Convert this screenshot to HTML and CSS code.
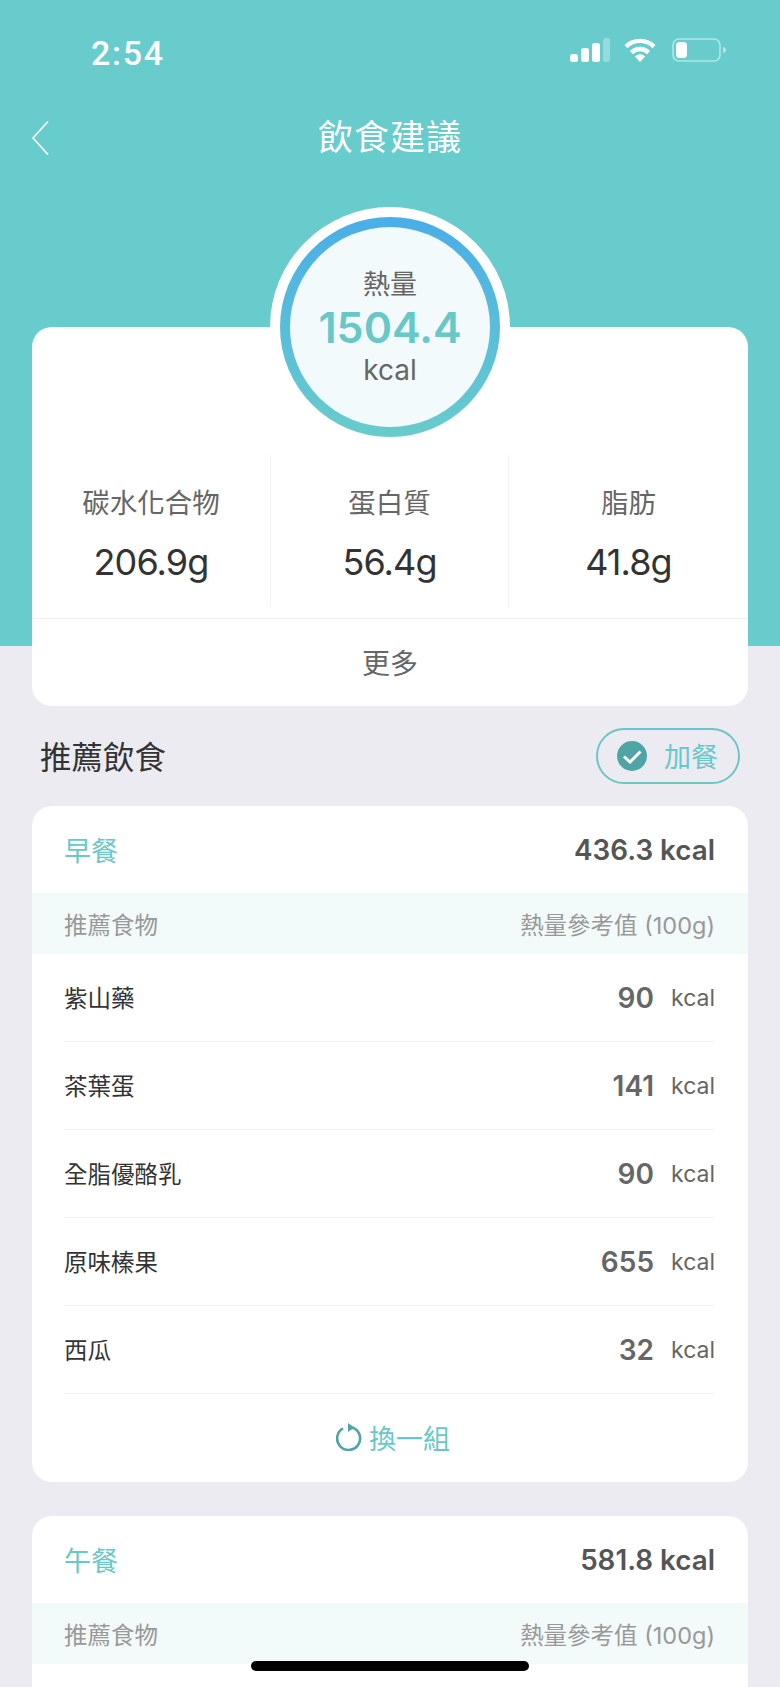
FILE: index.html
```html
<!DOCTYPE html>
<html lang="zh-Hant">
<head>
<meta charset="utf-8">
<title>飲食建議</title>
<link rel="stylesheet" href="styles.css">
</head>
<body>
<div class="screen">
  <div class="status">
    <span class="time">2:54</span>
    <div class="status-icons">
      <svg class="sig" width="40" height="24" viewBox="0 0 40 24"><rect x="0" y="16" width="8" height="8" rx="2.5" fill="#fff"/><rect x="11" y="10" width="8" height="14" rx="2.5" fill="#fff"/><rect x="22" y="5" width="8" height="19" rx="2.5" fill="#fff"/><rect x="33" y="0" width="7" height="24" rx="2.5" fill="#fff" opacity=".3"/></svg>
      <svg class="wifi" width="34" height="24" viewBox="0 0 34 24"><path d="M17 24l-5.2-5.6a7.4 7.4 0 0 1 10.4 0z" fill="#fff"/><path d="M8.5 14.6a12 12 0 0 1 17 0M3 8.6a20 20 0 0 1 28 0" fill="none" stroke="#fff" stroke-width="4.4" stroke-linecap="butt"/></svg>
      <svg class="batt" width="55" height="24" viewBox="0 0 55 24"><rect x="1" y="1" width="47" height="22" rx="6" fill="none" stroke="#fff" stroke-opacity=".5" stroke-width="1.6"/><rect x="4" y="4" width="11" height="16" rx="3.5" fill="#fff"/><path d="M51 9c2 .5 3 1.500 3 3s-1 2.500-3 3z" fill="#fff" fill-opacity=".5"/></svg>
    </div>
  </div>
  <div class="nav">
    <svg class="back" width="18" height="34" viewBox="0 0 18 34"><path d="M16.500 1L2 17l14.500 16" fill="none" stroke="#fff" stroke-width="1.700" stroke-linecap="round" stroke-linejoin="round"/></svg>
    <h1 class="nav-title">飲食建議</h1>
  </div>
  <div class="ring-wrap">
    <div class="ring-outer">
      <div class="ring">
        <div class="ring-inner">
          <span class="ring-label">熱量</span>
          <span class="ring-value">1504.4</span>
          <span class="ring-unit">kcal</span>
        </div>
      </div>
    </div>
  </div>
  <section class="card summary">
    <div class="macros">
      <div class="macro"><span class="macro-label">碳水化合物</span><span class="macro-value">206.9g</span></div>
      <div class="macro"><span class="macro-label">蛋白質</span><span class="macro-value">56.4g</span></div>
      <div class="macro"><span class="macro-label">脂肪</span><span class="macro-value">41.8g</span></div>
    </div>
    <div class="more">更多</div>
  </section>
  <div class="section-head">
    <h2 class="section-title">推薦飲食</h2>
    <div class="add-btn">
      <svg width="30" height="30" viewBox="0 0 30 30"><circle cx="15" cy="15" r="15" fill="#4fa5a6"/><path d="M7 15.500l6 5.500 10.500-10.500" fill="none" stroke="#fff" stroke-width="3"/></svg>
      <span>加餐</span>
    </div>
  </div>
  <section class="card meal">
    <div class="meal-head"><span class="meal-name">早餐</span><span class="meal-kcal">436.3 kcal</span></div>
    <div class="meal-sub"><span>推薦食物</span><span>熱量參考值 (100g)</span></div>
    <div class="food"><span class="food-name">紫山藥</span><span class="food-num">90</span><span class="food-unit">kcal</span></div>
    <div class="food"><span class="food-name">茶葉蛋</span><span class="food-num">141</span><span class="food-unit">kcal</span></div>
    <div class="food"><span class="food-name">全脂優酪乳</span><span class="food-num">90</span><span class="food-unit">kcal</span></div>
    <div class="food"><span class="food-name">原味榛果</span><span class="food-num">655</span><span class="food-unit">kcal</span></div>
    <div class="food"><span class="food-name">西瓜</span><span class="food-num">32</span><span class="food-unit">kcal</span></div>
    <div class="swap">
      <svg width="26" height="28" viewBox="0 0 26 28"><path d="M16.500 4.600A11.500 11.500 0 1 1 7 5.400" fill="none" stroke="#4fa5a6" stroke-width="2.600"/><path d="M12 0l6.500 4.500L12 9z" fill="#4fa5a6"/></svg>
      <span>換一組</span>
    </div>
  </section>
  <section class="card meal lunch">
    <div class="meal-head"><span class="meal-name">午餐</span><span class="meal-kcal">581.8 kcal</span></div>
    <div class="meal-sub"><span>推薦食物</span><span>熱量參考值 (100g)</span></div>
  </section>
  <div class="home-bar"></div>
</div>
</body>
</html>
```
FILE: styles.css
```css
* { box-sizing: border-box; }
html, body { margin: 0; padding: 0; }
body { font-family: Inter, "Noto Sans CJK TC", sans-serif; }
.screen {
  position: relative;
  width: 780px;
  height: 1687px;
  overflow: hidden;
  background: linear-gradient(#68cccc 646px, #ebebf1 646px);
}
.status {
  height: 104px;
  padding: 35px 53px 0 91px;
  display: flex;
  justify-content: space-between;
  align-items: flex-start;
}
.time {
  font: 500 34px/36px Roboto, sans-serif;
  letter-spacing: 1.700px;
  color: #fff;
}
.status-icons { display: flex; gap: 15px; padding-top: 3px; }
.sig { margin-right: -2px; }
.nav {
  height: 66px;
  position: relative;
  display: flex;
  align-items: center;
  justify-content: center;
}
.back { position: absolute; left: 31px; top: 17px; }
.nav-title {
  margin: 0 0 4px;
  font: 400 35px/50px "Noto Sans CJK TC", sans-serif;
  letter-spacing: 1px;
  color: #fff;
}
.ring-wrap {
  position: relative;
  z-index: 1;
  display: flex;
  justify-content: center;
  margin-top: 37px;
  margin-bottom: -120px;
}
.ring-outer {
  width: 240px;
  height: 240px;
  padding: 10px;
  border-radius: 50%;
  background: #fff;
}
.ring {
  width: 220px;
  height: 220px;
  padding: 10px;
  border-radius: 50%;
  background: linear-gradient(#4aaee8, #68cccc);
}
.ring-inner {
  width: 200px;
  height: 200px;
  border-radius: 50%;
  background: #f2fafb;
  display: flex;
  flex-direction: column;
  align-items: center;
  padding-top: 38px;
}
.ring-label { font-size: 27px; line-height: 39px; color: #666; }
.ring-value { font-size: 43px; line-height: 46px; font-weight: 600; color: #68c8c8; }
.ring-unit { font-size: 28px; line-height: 40px; color: #666; }
.card {
  margin: 0 32px;
  background: #fff;
  border-radius: 20px;
}
.summary { padding-top: 128px; height: 379px; }
.macros {
  height: 152px;
  display: grid;
  grid-template-columns: 239px 238px 1fr;
  margin-bottom: 11px;
}
.macro {
  display: flex;
  flex-direction: column;
  align-items: center;
  border-right: 1px solid #f3f3f5;
  padding-top: 28px;
}
.macro:last-child { border-right: 0; }
.macro-label { font-size: 27.500px; line-height: 40px; color: #666; }
.macro-value { font-size: 36px; line-height: 50px; margin-top: 14px; letter-spacing: -0.9px; color: #333; }
.more {
  height: 88px;
  padding-bottom: 2px;
  border-top: 1px solid #f1f1f3;
  display: flex;
  align-items: center;
  justify-content: center;
  font-size: 28px;
  color: #666;
}
.section-head {
  height: 100px;
  padding: 0 40px 0 40px;
  display: flex;
  align-items: center;
  justify-content: space-between;
}
.section-title { margin: 0 0 3px; font-size: 31.500px; font-weight: 400; color: #333; }
.add-btn {
  width: 144px;
  height: 56px;
  border: 2.500px solid #6cc6c6;
  border-radius: 28px;
  display: flex;
  align-items: center;
  gap: 17px;
  padding: 0 0 1px 19px;
  font-size: 27px;
  color: #68c8c8;
}
.meal { margin-bottom: 34px; }
.meal-head {
  height: 87px;
  padding: 0 33px 0 32px;
  display: flex;
  align-items: center;
  justify-content: space-between;
}
.meal-name { font-size: 27px; color: #68c8c8; }
.meal-kcal { font-size: 27.800px; font-weight: 600; color: #555; }
.meal-sub {
  height: 61px;
  padding: 0 33px 0 32px;
  background: #f2fafa;
  display: flex;
  align-items: center;
  justify-content: space-between;
  font-size: 23.500px;
  color: #999;
}
.food {
  height: 88px;
  margin: 0 33px 0 32px;
  display: flex;
  align-items: center;
  border-bottom: 1px solid #f3f3f5;
}
.food-name { flex: 1; padding-bottom: 2px; font-size: 23.500px; color: #333; }
.food-num { font-size: 28px; font-weight: 600; color: #666; }
.food-unit { width: 61px; text-align: right; font-size: 23px; color: #666; }
.swap {
  height: 88px;
  padding: 0 0 2px 6px;
  display: flex;
  align-items: center;
  justify-content: center;
  gap: 7px;
  font-size: 27px;
  color: #68c8c8;
}
.lunch { min-height: 300px; }
.home-bar {
  position: absolute;
  left: 251px;
  top: 1661px;
  width: 278px;
  height: 10px;
  border-radius: 5px;
  background: #000;
}
```
